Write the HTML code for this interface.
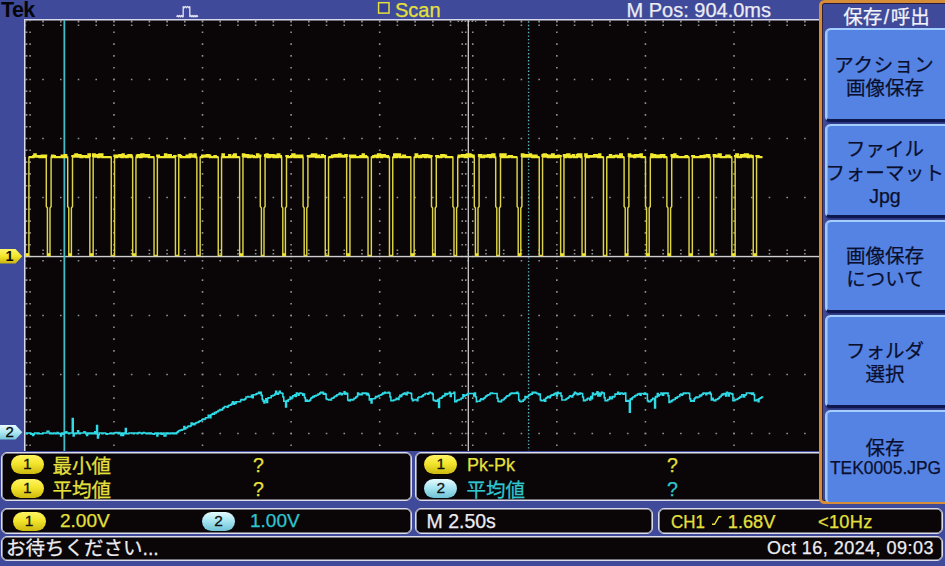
<!DOCTYPE html>
<html lang="ja">
<head>
<meta charset="utf-8">
<title>Tek TBS – 保存/呼出</title>
<style>
html,body{margin:0;padding:0;}
body{width:945px;height:566px;overflow:hidden;background:#3f4a9b;position:relative;
  font-family:"Liberation Sans","Noto Sans CJK JP",sans-serif;font-size:19.5px;line-height:24px;color:#eee;}
.abs{position:absolute;white-space:nowrap;}
.yel,.cya,.wht,.btn div,.mtitle{-webkit-text-stroke:0.25px currentColor;}
#plot{position:absolute;left:24px;top:19px;width:795px;height:432px;background:#0a0608;
  border-left:1px solid #d8d9ee;border-top:1px solid #d8d9ee;box-shadow:inset 0.5px 0.5px 0 0 #d8d9ee;box-sizing:border-box;}
.tek{left:1px;top:-2.3px;font-weight:bold;font-size:21.5px;color:#05050a;letter-spacing:-0.6px;}
.hdr{font-size:20px;top:-2px;}
.yel{color:#e6e03c;}
.cya{color:#2fc6d0;}
.wht{color:#ececf2;}
.panel{position:absolute;box-sizing:border-box;background:#0a0608;border:1px solid #dcdcea;border-radius:6px;box-shadow:inset 0 0 0 0.6px #dcdcea;}
.badge{-webkit-text-stroke:0.3px #111;position:absolute;width:33px;height:18.5px;border-radius:9.5px;color:#111;font-size:15.5px;line-height:18.5px;text-align:center;}
.b1{background:linear-gradient(#fff465 0%,#f3e52c 45%,#cdb910 100%);}
.b2{background:linear-gradient(#e6fbff 0%,#a9e6f2 45%,#6ec3d6 100%);}
#menu{position:absolute;left:818.6px;top:0;width:140px;height:504.4px;box-sizing:border-box;background:#3f4a9b;
  border:3px solid #d78d38;border-radius:5.5px;box-shadow:inset 0 0 0 0.9px #2a1c34;}
.btn{position:absolute;left:824.5px;width:130px;height:93.6px;box-sizing:border-box;background:#5583e4;
  border-radius:5.5px;border-top:2px solid #a4ceff;border-left:2px solid #9ec9ff;border-bottom:3px solid #0f184e;
  box-shadow:inset 0.6px 0 0 0 #93c0fc, 0 1.6px 0 0 #2c3680;color:#0a0f2e;text-align:center;}
.btn div{margin:-1px 0 0 -1px;position:absolute;left:0;width:119px;text-align:center;white-space:nowrap;font-size:19.5px;line-height:24px;}
.mtitle{left:827px;width:119px;text-align:center;top:5px;color:#f2f2f8;font-size:19.5px;}
</style>
</head>
<body>
<div id="plot"></div>
<svg id="scope" width="945" height="566" viewBox="0 0 945 566" style="position:absolute;left:0;top:0">
<defs><clipPath id="pc"><rect x="25" y="20" width="794" height="431"/></clipPath></defs>
<g clip-path="url(#pc)">
<g stroke="#909092" stroke-width="1.6" fill="none"><path d="M24.55,20.50H819" stroke-dasharray="1.6 16.117"/><path d="M24.55,79.50H819" stroke-dasharray="1.6 16.117"/><path d="M24.55,138.50H819" stroke-dasharray="1.6 16.117"/><path d="M24.55,197.50H819" stroke-dasharray="1.6 16.117"/><path d="M24.55,315.50H819" stroke-dasharray="1.6 16.117"/><path d="M24.55,374.50H819" stroke-dasharray="1.6 16.117"/><path d="M24.55,433.50H819" stroke-dasharray="1.6 16.117"/><path d="M25.35,19.70V451" stroke-dasharray="1.6 10.200"/><path d="M113.94,19.70V451" stroke-dasharray="1.6 10.200"/><path d="M202.52,19.70V451" stroke-dasharray="1.6 10.200"/><path d="M291.11,19.70V451" stroke-dasharray="1.6 10.200"/><path d="M379.69,19.70V451" stroke-dasharray="1.6 10.200"/><path d="M556.86,19.70V451" stroke-dasharray="1.6 10.200"/><path d="M645.44,19.70V451" stroke-dasharray="1.6 10.200"/><path d="M734.03,19.70V451" stroke-dasharray="1.6 10.200"/><path d="M26.60,19.70V451" stroke-dasharray="1.6 10.200"/><path d="M30.10,19.70V451" stroke-dasharray="1.6 10.200"/><path d="M24.55,21.60H819" stroke-dasharray="1.6 16.117"/><path d="M24.55,25.30H819" stroke-dasharray="1.6 16.117"/><path d="M462.27,19.70V451" stroke-dasharray="1.6 10.200"/><path d="M465.77,19.70V451" stroke-dasharray="1.6 10.200"/><path d="M472.77,19.70V451" stroke-dasharray="1.6 10.200"/><path d="M24.55,250.30H819" stroke-dasharray="1.6 16.117"/><path d="M24.55,253.80H819" stroke-dasharray="1.6 16.117"/><path d="M24.55,260.80H819" stroke-dasharray="1.6 16.117"/><path d="M457.57,21.3H476.27" stroke-dasharray="1.5 2.0"/></g>
<rect x="467.67" y="20" width="1.3" height="431" fill="#c9c9cc"/>
<rect x="25" y="255.85" width="794" height="1.4" fill="#cfcfd2"/>
<path d="M528.6,21.3V451" stroke="#5fb4bc" stroke-width="1.4" stroke-dasharray="1.4 2.12" fill="none"/>
<rect x="63.45" y="20" width="1.8" height="431" fill="#43bcc5"/>
<path d="M25.20,157.10 L25.20,157.10 L25.20,255.40 L28.90,255.40 L28.90,157.10 L46.30,157.10 L46.30,206.50 L47.40,208.00 L47.40,255.40 L50.00,255.40 L50.00,208.00 L51.10,206.50 L51.10,157.10 L67.70,157.10 L67.70,206.50 L68.80,208.00 L68.80,255.40 L71.40,255.40 L71.40,208.00 L72.50,206.50 L72.50,157.10 L89.85,157.10 L89.85,255.40 L93.15,255.40 L93.15,157.10 L111.25,157.10 L111.25,255.40 L114.55,255.40 L114.55,157.10 L132.65,157.10 L132.65,255.40 L135.95,255.40 L135.95,157.10 L154.05,157.10 L154.05,255.40 L157.35,255.40 L157.35,157.10 L175.45,157.10 L175.45,255.40 L178.75,255.40 L178.75,157.10 L196.85,157.10 L196.85,255.40 L200.15,255.40 L200.15,157.10 L218.25,157.10 L218.25,255.40 L221.55,255.40 L221.55,157.10 L239.65,157.10 L239.65,255.40 L242.95,255.40 L242.95,157.10 L260.30,157.10 L260.30,206.50 L261.40,208.00 L261.40,255.40 L264.00,255.40 L264.00,208.00 L265.10,206.50 L265.10,157.10 L281.70,157.10 L281.70,206.50 L282.80,208.00 L282.80,255.40 L285.40,255.40 L285.40,208.00 L286.50,206.50 L286.50,157.10 L303.10,157.10 L303.10,206.50 L304.20,208.00 L304.20,255.40 L306.80,255.40 L306.80,208.00 L307.90,206.50 L307.90,157.10 L325.25,157.10 L325.25,255.40 L328.55,255.40 L328.55,157.10 L346.65,157.10 L346.65,255.40 L349.95,255.40 L349.95,157.10 L368.05,157.10 L368.05,255.40 L371.35,255.40 L371.35,157.10 L389.45,157.10 L389.45,255.40 L392.75,255.40 L392.75,157.10 L410.85,157.10 L410.85,255.40 L414.15,255.40 L414.15,157.10 L431.50,157.10 L431.50,206.50 L432.60,208.00 L432.60,255.40 L435.20,255.40 L435.20,208.00 L436.30,206.50 L436.30,157.10 L452.90,157.10 L452.90,206.50 L454.00,208.00 L454.00,255.40 L456.60,255.40 L456.60,208.00 L457.70,206.50 L457.70,157.10 L474.30,157.10 L474.30,206.50 L475.40,208.00 L475.40,255.40 L478.00,255.40 L478.00,208.00 L479.10,206.50 L479.10,157.10 L495.70,157.10 L495.70,206.50 L496.80,208.00 L496.80,255.40 L499.40,255.40 L499.40,208.00 L500.50,206.50 L500.50,157.10 L517.10,157.10 L517.10,206.50 L518.20,208.00 L518.20,255.40 L520.80,255.40 L520.80,208.00 L521.90,206.50 L521.90,157.10 L539.25,157.10 L539.25,255.40 L542.55,255.40 L542.55,157.10 L560.65,157.10 L560.65,255.40 L563.95,255.40 L563.95,157.10 L582.05,157.10 L582.05,255.40 L585.35,255.40 L585.35,157.10 L603.45,157.10 L603.45,255.40 L606.75,255.40 L606.75,157.10 L624.10,157.10 L624.10,206.50 L625.20,208.00 L625.20,255.40 L627.80,255.40 L627.80,208.00 L628.90,206.50 L628.90,157.10 L645.50,157.10 L645.50,206.50 L646.60,208.00 L646.60,255.40 L649.20,255.40 L649.20,208.00 L650.30,206.50 L650.30,157.10 L666.90,157.10 L666.90,206.50 L668.00,208.00 L668.00,255.40 L670.60,255.40 L670.60,208.00 L671.70,206.50 L671.70,157.10 L689.05,157.10 L689.05,255.40 L692.35,255.40 L692.35,157.10 L710.45,157.10 L710.45,255.40 L713.75,255.40 L713.75,157.10 L731.85,157.10 L731.85,255.40 L735.15,255.40 L735.15,157.10 L753.25,157.10 L753.25,255.40 L756.55,255.40 L756.55,157.10 L762.40,157.10" fill="none" stroke="#ddd447" stroke-width="1.45" stroke-linejoin="miter"/>
<path d="M28.90,157.10 L30.40,157.10 L32.40,157.10 L33.40,157.10 L33.40,156.10 L34.40,156.10 L34.40,157.10 L34.40,154.50 L35.60,154.50 L35.60,157.10 L35.60,156.10 L37.60,156.10 L37.60,157.10 L37.60,156.10 L39.60,156.10 L39.60,157.10 L40.80,157.10 L41.80,157.10 L41.80,155.60 L43.80,155.60 L43.80,157.10 L44.80,157.10 L44.80,155.60 L46.00,155.60 L46.00,157.10 L46.30,157.10 M51.10,157.10 L52.10,157.10 L52.10,155.60 L53.30,155.60 L53.30,157.10 L53.30,156.10 L54.80,156.10 L54.80,157.10 L55.80,157.10 L57.80,157.10 L59.80,157.10 L61.80,157.10 L61.80,155.60 L63.80,155.60 L63.80,157.10 L65.00,157.10 L65.00,155.10 L66.20,155.10 L66.20,157.10 L67.70,157.10 L67.70,157.10 M72.50,157.10 L72.50,156.10 L74.50,156.10 L74.50,157.10 L74.50,155.60 L75.50,155.60 L75.50,157.10 L75.50,154.50 L77.00,154.50 L77.00,157.10 L77.00,156.10 L79.00,156.10 L79.00,157.10 L79.00,155.10 L80.50,155.10 L80.50,157.10 L82.50,157.10 L82.50,156.10 L84.50,156.10 L84.50,157.10 L84.50,156.10 L86.00,156.10 L86.00,157.10 L87.00,157.10 L88.50,157.10 L88.50,154.50 L89.85,154.50 L89.85,157.10 L89.85,157.10 M93.15,157.10 L93.15,154.50 L94.65,154.50 L94.65,157.10 L94.65,156.10 L96.15,156.10 L96.15,157.10 L96.15,155.10 L98.15,155.10 L98.15,157.10 L99.35,157.10 L99.35,154.50 L101.35,154.50 L101.35,157.10 L101.35,154.50 L102.35,154.50 L102.35,157.10 L103.85,157.10 L105.85,157.10 L107.35,157.10 L108.85,157.10 L110.85,157.10 L111.25,157.10 M114.55,157.10 L114.55,155.60 L115.75,155.60 L115.75,157.10 L116.95,157.10 L116.95,155.60 L117.95,155.60 L117.95,157.10 L117.95,155.60 L119.45,155.60 L119.45,157.10 L119.45,155.10 L121.45,155.10 L121.45,157.10 L122.65,157.10 L122.65,154.50 L123.65,154.50 L123.65,157.10 L123.65,156.10 L125.65,156.10 L125.65,157.10 L127.65,157.10 L127.65,155.60 L128.65,155.60 L128.65,157.10 L128.65,155.10 L130.65,155.10 L130.65,157.10 L130.65,155.60 L131.65,155.60 L131.65,157.10 L132.65,157.10 M135.95,157.10 L136.95,157.10 L136.95,155.60 L137.95,155.60 L137.95,157.10 L137.95,155.10 L139.95,155.10 L139.95,157.10 L141.45,157.10 L141.45,154.50 L143.45,154.50 L143.45,157.10 L143.45,155.10 L145.45,155.10 L145.45,157.10 L145.45,155.10 L146.45,155.10 L146.45,157.10 L146.45,155.60 L147.95,155.60 L147.95,157.10 L147.95,155.10 L148.95,155.10 L148.95,157.10 L150.15,157.10 L151.15,157.10 L152.65,157.10 L153.65,157.10 L154.05,157.10 M157.35,157.10 L157.35,155.60 L158.85,155.60 L158.85,157.10 L160.35,157.10 L161.85,157.10 L163.05,157.10 L165.05,157.10 L165.05,154.50 L166.25,154.50 L166.25,157.10 L167.75,157.10 L168.75,157.10 L168.75,155.10 L170.75,155.10 L170.75,157.10 L172.75,157.10 L174.25,157.10 L174.25,156.10 L175.45,156.10 L175.45,157.10 L175.45,157.10 M178.75,157.10 L178.75,155.10 L179.95,155.10 L179.95,157.10 L179.95,156.10 L181.15,156.10 L181.15,157.10 L183.15,157.10 L184.65,157.10 L185.65,157.10 L186.65,157.10 L186.65,155.60 L187.85,155.60 L187.85,157.10 L189.85,157.10 L189.85,154.50 L191.35,154.50 L191.35,157.10 L191.35,156.10 L193.35,156.10 L193.35,157.10 L193.35,155.60 L194.55,155.60 L194.55,157.10 L194.55,154.50 L195.55,154.50 L195.55,157.10 L196.75,157.10 L196.85,157.10 M200.15,157.10 L202.15,157.10 L202.15,155.60 L203.65,155.60 L203.65,157.10 L203.65,156.10 L204.65,156.10 L204.65,157.10 L204.65,155.60 L205.85,155.60 L205.85,157.10 L205.85,155.60 L207.05,155.60 L207.05,157.10 L207.05,155.10 L208.55,155.10 L208.55,157.10 L208.55,155.60 L210.05,155.60 L210.05,157.10 L211.05,157.10 L212.55,157.10 L214.55,157.10 L214.55,156.10 L215.75,156.10 L215.75,157.10 L217.75,157.10 L218.25,157.10 M221.55,157.10 L222.55,157.10 L222.55,154.50 L223.75,154.50 L223.75,157.10 L224.75,157.10 L226.25,157.10 L228.25,157.10 L229.25,157.10 L229.25,155.10 L230.25,155.10 L230.25,157.10 L231.25,157.10 L233.25,157.10 L233.25,155.60 L234.25,155.60 L234.25,157.10 L234.25,154.50 L235.75,154.50 L235.75,157.10 L236.95,157.10 L238.45,157.10 L239.65,157.10 L239.65,157.10 M242.95,157.10 L242.95,154.50 L244.15,154.50 L244.15,157.10 L244.15,155.60 L246.15,155.60 L246.15,157.10 L246.15,155.10 L248.15,155.10 L248.15,157.10 L249.15,157.10 L250.35,157.10 L250.35,155.60 L251.85,155.60 L251.85,157.10 L251.85,156.10 L253.85,156.10 L253.85,157.10 L255.85,157.10 L257.05,157.10 L257.05,154.50 L258.25,154.50 L258.25,157.10 L258.25,155.60 L260.25,155.60 L260.25,157.10 L260.30,157.10 M265.10,157.10 L265.10,155.10 L266.60,155.10 L266.60,157.10 L266.60,154.50 L267.60,154.50 L267.60,157.10 L269.60,157.10 L269.60,155.10 L271.60,155.10 L271.60,157.10 L271.60,155.60 L272.60,155.60 L272.60,157.10 L272.60,155.10 L273.60,155.10 L273.60,157.10 L274.60,157.10 L274.60,155.60 L275.80,155.60 L275.80,157.10 L277.80,157.10 L277.80,154.50 L279.30,154.50 L279.30,157.10 L279.30,156.10 L280.80,156.10 L280.80,157.10 L281.70,157.10 M286.50,157.10 L286.50,156.10 L287.70,156.10 L287.70,157.10 L289.20,157.10 L290.20,157.10 L291.20,157.10 L291.20,156.10 L292.40,156.10 L292.40,157.10 L292.40,154.50 L294.40,154.50 L294.40,157.10 L295.90,157.10 L295.90,155.60 L296.90,155.60 L296.90,157.10 L297.90,157.10 L297.90,155.60 L299.40,155.60 L299.40,157.10 L300.90,157.10 L300.90,155.60 L302.10,155.60 L302.10,157.10 L303.10,157.10 M307.90,157.10 L307.90,156.10 L309.40,156.10 L309.40,157.10 L309.40,156.10 L310.90,156.10 L310.90,157.10 L310.90,155.60 L312.10,155.60 L312.10,157.10 L312.10,154.50 L314.10,154.50 L314.10,157.10 L314.10,154.50 L316.10,154.50 L316.10,157.10 L317.60,157.10 L317.60,155.60 L318.80,155.60 L318.80,157.10 L320.80,157.10 L321.80,157.10 L321.80,155.10 L322.80,155.10 L322.80,157.10 L322.80,156.10 L324.80,156.10 L324.80,157.10 L325.25,157.10 M328.55,157.10 L330.55,157.10 L332.05,157.10 L332.05,155.60 L333.55,155.60 L333.55,157.10 L333.55,156.10 L334.75,156.10 L334.75,157.10 L334.75,155.10 L336.25,155.10 L336.25,157.10 L336.25,155.10 L337.75,155.10 L337.75,157.10 L337.75,156.10 L338.95,156.10 L338.95,157.10 L338.95,154.50 L340.45,154.50 L340.45,157.10 L340.45,155.60 L341.95,155.60 L341.95,157.10 L341.95,156.10 L343.15,156.10 L343.15,157.10 L343.15,156.10 L344.15,156.10 L344.15,157.10 L344.15,156.10 L345.35,156.10 L345.35,157.10 L345.35,155.10 L346.65,155.10 L346.65,157.10 L346.65,157.10 M349.95,157.10 L349.95,155.60 L351.15,155.60 L351.15,157.10 L353.15,157.10 L353.15,155.60 L355.15,155.60 L355.15,157.10 L356.15,157.10 L358.15,157.10 L359.35,157.10 L360.35,157.10 L360.35,156.10 L361.55,156.10 L361.55,157.10 L362.75,157.10 L362.75,154.50 L363.75,154.50 L363.75,157.10 L364.75,157.10 L364.75,156.10 L365.95,156.10 L365.95,157.10 L367.95,157.10 L368.05,157.10 M371.35,157.10 L372.35,157.10 L373.35,157.10 L373.35,156.10 L375.35,156.10 L375.35,157.10 L375.35,155.60 L376.85,155.60 L376.85,157.10 L378.05,157.10 L378.05,154.50 L380.05,154.50 L380.05,157.10 L380.05,155.10 L381.05,155.10 L381.05,157.10 L382.05,157.10 L382.05,155.60 L383.25,155.60 L383.25,157.10 L383.25,155.10 L384.75,155.10 L384.75,157.10 L384.75,156.10 L385.95,156.10 L385.95,157.10 L385.95,156.10 L387.95,156.10 L387.95,157.10 L389.15,157.10 L389.45,157.10 M392.75,157.10 L394.25,157.10 L394.25,154.50 L395.75,154.50 L395.75,157.10 L396.75,157.10 L396.75,156.10 L397.95,156.10 L397.95,157.10 L397.95,154.50 L399.95,154.50 L399.95,157.10 L400.95,157.10 L402.95,157.10 L402.95,155.60 L404.95,155.60 L404.95,157.10 L405.95,157.10 L407.15,157.10 L408.65,157.10 L409.85,157.10 L410.85,157.10 M414.15,157.10 L415.65,157.10 L415.65,154.50 L417.15,154.50 L417.15,157.10 L417.15,156.10 L419.15,156.10 L419.15,157.10 L421.15,157.10 L421.15,155.60 L423.15,155.60 L423.15,157.10 L423.15,155.10 L425.15,155.10 L425.15,157.10 L426.15,157.10 L426.15,155.10 L427.15,155.10 L427.15,157.10 L427.15,155.60 L429.15,155.60 L429.15,157.10 L430.15,157.10 L430.15,156.10 L431.50,156.10 L431.50,157.10 L431.50,157.10 M436.30,157.10 L436.30,156.10 L438.30,156.10 L438.30,157.10 L439.80,157.10 L441.30,157.10 L441.30,155.10 L442.80,155.10 L442.80,157.10 L442.80,155.10 L444.00,155.10 L444.00,157.10 L444.00,155.60 L446.00,155.60 L446.00,157.10 L447.50,157.10 L449.50,157.10 L451.50,157.10 L452.70,157.10 L452.90,157.10 M457.70,157.10 L458.70,157.10 L458.70,155.60 L460.70,155.60 L460.70,157.10 L460.70,155.60 L462.20,155.60 L462.20,157.10 L462.20,155.10 L463.40,155.10 L463.40,157.10 L463.40,155.10 L464.90,155.10 L464.90,157.10 L466.90,157.10 L466.90,154.50 L468.40,154.50 L468.40,157.10 L468.40,155.60 L469.40,155.60 L469.40,157.10 L469.40,154.50 L470.40,154.50 L470.40,157.10 L470.40,155.10 L471.60,155.10 L471.60,157.10 L471.60,155.60 L473.60,155.60 L473.60,157.10 L474.30,157.10 M479.10,157.10 L479.10,155.10 L480.30,155.10 L480.30,157.10 L480.30,155.10 L481.30,155.10 L481.30,157.10 L482.80,157.10 L484.00,157.10 L484.00,155.60 L486.00,155.60 L486.00,157.10 L486.00,156.10 L488.00,156.10 L488.00,157.10 L488.00,155.10 L490.00,155.10 L490.00,157.10 L491.20,157.10 L491.20,155.60 L492.40,155.60 L492.40,157.10 L492.40,154.50 L494.40,154.50 L494.40,157.10 L495.70,157.10 L495.70,157.10 M500.50,157.10 L500.50,154.50 L501.50,154.50 L501.50,157.10 L503.50,157.10 L503.50,154.50 L505.50,154.50 L505.50,157.10 L507.50,157.10 L508.70,157.10 L508.70,156.10 L509.90,156.10 L509.90,157.10 L509.90,156.10 L511.90,156.10 L511.90,157.10 L512.90,157.10 L514.10,157.10 L515.10,157.10 L516.60,157.10 L517.10,157.10 M521.90,157.10 L521.90,154.50 L523.40,154.50 L523.40,157.10 L523.40,155.10 L524.40,155.10 L524.40,157.10 L524.40,155.60 L525.60,155.60 L525.60,157.10 L525.60,155.10 L526.60,155.10 L526.60,157.10 L526.60,155.10 L528.60,155.10 L528.60,157.10 L528.60,155.60 L529.80,155.60 L529.80,157.10 L529.80,154.50 L531.00,154.50 L531.00,157.10 L531.00,155.60 L532.50,155.60 L532.50,157.10 L534.50,157.10 L534.50,155.60 L536.50,155.60 L536.50,157.10 L538.50,157.10 L539.25,157.10 M542.55,157.10 L542.55,155.10 L543.75,155.10 L543.75,157.10 L543.75,154.50 L545.75,154.50 L545.75,157.10 L545.75,155.10 L546.95,155.10 L546.95,157.10 L546.95,155.60 L547.95,155.60 L547.95,157.10 L549.45,157.10 L549.45,155.60 L550.65,155.60 L550.65,157.10 L552.15,157.10 L552.15,154.50 L553.65,154.50 L553.65,157.10 L554.85,157.10 L554.85,156.10 L556.85,156.10 L556.85,157.10 L558.05,157.10 L558.05,155.60 L559.05,155.60 L559.05,157.10 L559.05,156.10 L560.65,156.10 L560.65,157.10 L560.65,157.10 M563.95,157.10 L563.95,155.10 L565.15,155.10 L565.15,157.10 L566.15,157.10 L566.15,155.60 L567.35,155.60 L567.35,157.10 L567.35,154.50 L569.35,154.50 L569.35,157.10 L570.85,157.10 L570.85,156.10 L572.85,156.10 L572.85,157.10 L572.85,155.10 L573.85,155.10 L573.85,157.10 L575.85,157.10 L576.85,157.10 L576.85,155.10 L578.05,155.10 L578.05,157.10 L578.05,154.50 L580.05,154.50 L580.05,157.10 L580.05,154.50 L581.25,154.50 L581.25,157.10 L582.05,157.10 M585.35,157.10 L585.35,154.50 L586.55,154.50 L586.55,157.10 L587.55,157.10 L588.75,157.10 L588.75,156.10 L590.75,156.10 L590.75,157.10 L590.75,156.10 L592.75,156.10 L592.75,157.10 L592.75,156.10 L594.25,156.10 L594.25,157.10 L594.25,155.10 L595.75,155.10 L595.75,157.10 L595.75,155.10 L596.75,155.10 L596.75,157.10 L596.75,156.10 L598.25,156.10 L598.25,157.10 L599.25,157.10 L599.25,154.50 L600.25,154.50 L600.25,157.10 L602.25,157.10 L603.45,157.10 M606.75,157.10 L608.75,157.10 L609.95,157.10 L609.95,155.10 L611.15,155.10 L611.15,157.10 L612.35,157.10 L613.85,157.10 L613.85,156.10 L615.85,156.10 L615.85,157.10 L615.85,155.60 L617.05,155.60 L617.05,157.10 L617.05,156.10 L618.25,156.10 L618.25,157.10 L620.25,157.10 L620.25,154.50 L621.75,154.50 L621.75,157.10 L622.75,157.10 L624.10,157.10 L624.10,157.10 M628.90,157.10 L628.90,154.50 L630.10,154.50 L630.10,157.10 L630.10,155.60 L632.10,155.60 L632.10,157.10 L632.10,155.60 L634.10,155.60 L634.10,157.10 L635.10,157.10 L635.10,155.10 L636.60,155.10 L636.60,157.10 L636.60,155.10 L638.10,155.10 L638.10,157.10 L638.10,155.60 L639.30,155.60 L639.30,157.10 L639.30,155.10 L640.50,155.10 L640.50,157.10 L640.50,154.50 L641.70,154.50 L641.70,157.10 L643.20,157.10 L644.40,157.10 L645.50,157.10 M650.30,157.10 L651.30,157.10 L651.30,154.50 L652.30,154.50 L652.30,157.10 L653.50,157.10 L653.50,155.10 L655.00,155.10 L655.00,157.10 L655.00,155.60 L656.20,155.60 L656.20,157.10 L657.40,157.10 L657.40,155.60 L658.90,155.60 L658.90,157.10 L660.90,157.10 L660.90,155.10 L661.90,155.10 L661.90,157.10 L661.90,155.10 L663.10,155.10 L663.10,157.10 L663.10,155.10 L664.30,155.10 L664.30,157.10 L665.30,157.10 L666.50,157.10 L666.90,157.10 M671.70,157.10 L671.70,155.10 L673.20,155.10 L673.20,157.10 L674.40,157.10 L674.40,154.50 L675.40,154.50 L675.40,157.10 L675.40,156.10 L677.40,156.10 L677.40,157.10 L679.40,157.10 L680.60,157.10 L681.60,157.10 L683.60,157.10 L685.60,157.10 L685.60,156.10 L687.10,156.10 L687.10,157.10 L688.60,157.10 L689.05,157.10 M692.35,157.10 L692.35,156.10 L693.85,156.10 L693.85,157.10 L695.35,157.10 L697.35,157.10 L698.55,157.10 L700.55,157.10 L700.55,156.10 L702.55,156.10 L702.55,157.10 L704.55,157.10 L704.55,155.60 L706.05,155.60 L706.05,157.10 L706.05,155.60 L707.25,155.60 L707.25,157.10 L707.25,155.10 L709.25,155.10 L709.25,157.10 L710.45,157.10 M713.75,157.10 L713.75,155.10 L714.95,155.10 L714.95,157.10 L714.95,156.10 L716.15,156.10 L716.15,157.10 L716.15,155.60 L717.15,155.60 L717.15,157.10 L717.15,156.10 L718.65,156.10 L718.65,157.10 L718.65,154.50 L720.65,154.50 L720.65,157.10 L721.65,157.10 L722.85,157.10 L724.05,157.10 L725.25,157.10 L726.45,157.10 L726.45,155.60 L727.45,155.60 L727.45,157.10 L727.45,155.60 L729.45,155.60 L729.45,157.10 L730.65,157.10 L731.85,157.10 M735.15,157.10 L735.15,156.10 L736.35,156.10 L736.35,157.10 L736.35,154.50 L737.85,154.50 L737.85,157.10 L739.35,157.10 L740.85,157.10 L740.85,155.10 L742.85,155.10 L742.85,157.10 L742.85,155.60 L744.85,155.60 L744.85,157.10 L744.85,154.50 L745.85,154.50 L745.85,157.10 L745.85,154.50 L747.85,154.50 L747.85,157.10 L749.05,157.10 L749.05,155.60 L751.05,155.60 L751.05,157.10 L751.05,156.10 L752.55,156.10 L752.55,157.10 L753.25,157.10 M756.55,157.10 L756.55,156.10 L758.55,156.10 L758.55,157.10 L759.55,157.10 L760.55,157.10 L762.05,157.10 L762.40,157.10" fill="none" stroke="#f2ea2e" stroke-width="2.4"/>
<g fill="#efe52c"><rect x="25.70" y="253.20" width="3.2" height="2.6"/><rect x="47.10" y="253.20" width="3.2" height="2.6"/><rect x="68.50" y="253.20" width="3.2" height="2.6"/><rect x="89.90" y="253.20" width="3.2" height="2.6"/><rect x="132.70" y="253.20" width="3.2" height="2.6"/><rect x="239.70" y="253.20" width="3.2" height="2.6"/><rect x="282.50" y="253.20" width="3.2" height="2.6"/><rect x="346.70" y="253.20" width="3.2" height="2.6"/><rect x="410.90" y="253.20" width="3.2" height="2.6"/><rect x="432.30" y="253.20" width="3.2" height="2.6"/><rect x="475.10" y="253.20" width="3.2" height="2.6"/><rect x="517.90" y="253.20" width="3.2" height="2.6"/><rect x="560.70" y="253.20" width="3.2" height="2.6"/><rect x="582.10" y="253.20" width="3.2" height="2.6"/><rect x="624.90" y="253.20" width="3.2" height="2.6"/><rect x="646.30" y="253.20" width="3.2" height="2.6"/><rect x="667.70" y="253.20" width="3.2" height="2.6"/><rect x="689.10" y="253.20" width="3.2" height="2.6"/><rect x="710.50" y="253.20" width="3.2" height="2.6"/><rect x="731.90" y="253.20" width="3.2" height="2.6"/><rect x="753.30" y="253.20" width="3.2" height="2.6"/></g>
<path d="M25.50,433.06 H26.40 V433.65 H27.30 V433.06 H28.20 V433.06 H29.10 V433.06 H30.00 V433.06 H30.90 V434.24 H31.80 V433.65 H32.70 V435.42 H33.60 V434.24 H34.50 V433.06 H35.40 V433.06 H36.30 V433.06 H37.20 V433.65 H38.10 V433.06 H39.00 V433.65 H39.90 V433.65 H40.80 V433.65 H41.70 V433.65 H42.60 V433.06 H43.50 V433.06 H44.40 V433.06 H45.30 V433.06 H46.20 V433.06 H47.10 V431.29 H48.00 V431.29 H48.90 V433.06 H49.80 V433.65 H50.70 V433.06 H51.60 V433.65 H52.50 V433.65 H53.40 V433.06 H54.30 V433.06 H55.20 V433.65 H56.10 V433.65 H57.00 V432.47 H57.90 V433.06 H58.80 V433.65 H59.70 V433.65 H60.60 V436.01 H61.50 V433.06 H62.40 V434.24 H63.30 V433.65 H64.20 V432.47 H65.10 V433.06 H66.00 V431.88 H66.90 V433.06 H67.80 V433.06 H68.70 V433.65 H69.60 V433.06 H70.50 V433.06 H71.40 V433.06 H72.30 V418.60 H73.20 V436.00 H74.10 V433.65 H75.00 V433.06 H75.90 V433.65 H76.80 V433.06 H77.70 V430.70 H78.60 V433.06 H79.50 V433.65 H80.40 V433.06 H81.30 V433.06 H82.20 V433.06 H83.10 V433.06 H84.00 V431.88 H84.90 V432.47 H85.80 V433.65 H86.70 V435.42 H87.60 V433.06 H88.50 V433.65 H89.40 V433.06 H90.30 V433.65 H91.20 V433.06 H92.10 V433.65 H93.00 V433.06 H93.90 V433.65 H94.80 V431.88 H95.70 V433.65 H96.60 V425.50 H97.50 V438.00 H98.40 V434.83 H99.30 V433.06 H100.20 V433.06 H101.10 V433.06 H102.00 V433.65 H102.90 V433.06 H103.80 V433.06 H104.70 V433.06 H105.60 V433.65 H106.50 V434.24 H107.40 V433.65 H108.30 V433.65 H109.20 V433.65 H110.10 V433.06 H111.00 V433.06 H111.90 V433.65 H112.80 V433.65 H113.70 V433.06 H114.60 V433.06 H115.50 V432.47 H116.40 V432.47 H117.30 V433.06 H118.20 V433.65 H119.10 V432.47 H120.00 V433.65 H120.90 V435.42 H121.80 V433.06 H122.70 V435.42 H123.60 V433.06 H124.50 V433.65 H125.40 V428.50 H126.30 V433.65 H127.20 V433.65 H128.10 V433.65 H129.00 V433.06 H129.90 V433.06 H130.80 V433.06 H131.70 V433.06 H132.60 V433.06 H133.50 V433.65 H134.40 V433.06 H135.30 V433.06 H136.20 V433.06 H137.10 V433.65 H138.00 V433.06 H138.90 V432.47 H139.80 V433.06 H140.70 V433.06 H141.60 V433.65 H142.50 V433.06 H143.40 V432.47 H144.30 V433.06 H145.20 V433.06 H146.10 V433.65 H147.00 V433.65 H147.90 V433.06 H148.80 V433.06 H149.70 V433.65 H150.60 V433.06 H151.50 V433.65 H152.40 V433.65 H153.30 V434.24 H154.20 V433.65 H155.10 V433.06 H156.00 V433.06 H156.90 V436.01 H157.80 V433.06 H158.70 V433.65 H159.60 V433.65 H160.50 V433.06 H161.40 V434.24 H162.30 V433.65 H163.20 V433.06 H164.10 V436.01 H165.00 V436.01 H165.90 V433.06 H166.80 V433.65 H167.70 V433.06 H168.60 V433.65 H169.50 V433.65 H170.40 V433.06 H171.30 V433.06 H172.20 V433.65 H173.10 V433.06 H174.00 V433.65 H174.90 V433.06 H175.80 V433.65 H176.70 V432.47 H177.60 V431.88 H178.50 V430.70 H179.40 V430.70 H180.30 V430.11 H181.20 V430.11 H182.10 V429.52 H183.00 V429.52 H183.90 V426.57 H184.80 V428.93 H185.70 V427.75 H186.60 V427.75 H187.50 V426.57 H188.40 V425.98 H189.30 V426.57 H190.20 V425.98 H191.10 V423.03 H192.00 V424.80 H192.90 V423.62 H193.80 V424.80 H194.70 V423.62 H195.60 V423.03 H196.50 V422.44 H197.40 V422.44 H198.30 V421.85 H199.20 V421.26 H200.10 V420.67 H201.00 V420.67 H201.90 V419.49 H202.80 V418.90 H203.70 V419.49 H204.60 V418.90 H205.50 V417.72 H206.40 V417.72 H207.30 V417.72 H208.20 V415.36 H209.10 V415.95 H210.00 V417.72 H210.90 V414.77 H211.80 V414.18 H212.70 V413.59 H213.60 V414.18 H214.50 V412.41 H215.40 V413.00 H216.30 V411.82 H217.20 V411.82 H218.10 V410.64 H219.00 V410.64 H219.90 V409.46 H220.80 V409.46 H221.70 V410.05 H222.60 V408.28 H223.50 V407.69 H224.40 V406.51 H225.30 V406.51 H226.20 V406.51 H227.10 V407.10 H228.00 V405.92 H228.90 V405.33 H229.80 V405.33 H230.70 V404.74 H231.60 V403.56 H232.50 V401.79 H233.40 V404.15 H234.30 V402.38 H235.20 V403.56 H236.10 V401.79 H237.00 V401.79 H237.90 V401.79 H238.80 V401.79 H239.70 V401.79 H240.60 V400.02 H241.50 V399.43 H242.40 V399.43 H243.30 V400.02 H244.20 V399.43 H245.10 V398.84 H246.00 V397.07 H246.90 V397.07 H247.80 V396.48 H248.70 V397.07 H249.60 V397.07 H250.50 V397.07 H251.40 V395.30 H252.30 V397.66 H253.20 V394.71 H254.10 V394.71 H255.00 V394.71 H255.90 V394.12 H256.80 V393.53 H257.70 V393.53 H258.60 V392.35 H259.50 V393.53 H260.40 V392.35 H261.30 V395.30 H262.20 V399.43 H263.10 V401.20 H264.00 V402.97 H264.90 V400.61 H265.80 V398.84 H266.70 V402.38 H267.60 V398.25 H268.50 V397.66 H269.40 V397.66 H270.30 V397.66 H271.20 V395.89 H272.10 V395.89 H273.00 V395.30 H273.90 V395.30 H274.80 V394.12 H275.70 V391.17 H276.60 V393.53 H277.50 V394.12 H278.40 V392.94 H279.30 V391.17 H280.20 V392.94 H281.10 V392.94 H282.00 V393.53 H282.90 V397.07 H283.80 V401.20 H284.70 V401.20 H285.60 V407.00 H286.50 V400.61 H287.40 V401.20 H288.30 V399.43 H289.20 V399.43 H290.10 V397.07 H291.00 V398.84 H291.90 V397.66 H292.80 V395.89 H293.70 V395.89 H294.60 V394.71 H295.50 V396.48 H296.40 V392.94 H297.30 V393.53 H298.20 V395.30 H299.10 V393.53 H300.00 V392.94 H300.90 V393.53 H301.80 V393.53 H302.70 V395.30 H303.60 V394.12 H304.50 V397.66 H305.40 V401.20 H306.30 V400.02 H307.20 V401.20 H308.10 V401.20 H309.00 V400.61 H309.90 V400.02 H310.80 V398.25 H311.70 V397.66 H312.60 V396.48 H313.50 V397.07 H314.40 V395.89 H315.30 V395.89 H316.20 V395.30 H317.10 V395.30 H318.00 V394.12 H318.90 V394.12 H319.80 V392.94 H320.70 V392.35 H321.60 V392.94 H322.50 V392.35 H323.40 V394.12 H324.30 V393.53 H325.20 V394.12 H326.10 V398.84 H327.00 V399.43 H327.90 V399.43 H328.80 V400.02 H329.70 V399.43 H330.60 V400.02 H331.50 V398.25 H332.40 V398.25 H333.30 V397.66 H334.20 V396.48 H335.10 V396.48 H336.00 V395.89 H336.90 V394.71 H337.80 V394.71 H338.70 V394.12 H339.60 V392.94 H340.50 V393.53 H341.40 V394.71 H342.30 V393.53 H343.20 V393.53 H344.10 V391.76 H345.00 V394.12 H345.90 V392.94 H346.80 V393.53 H347.70 V400.02 H348.60 V400.61 H349.50 V400.61 H350.40 V399.43 H351.30 V399.43 H352.20 V400.02 H353.10 V399.43 H354.00 V398.25 H354.90 V398.25 H355.80 V397.07 H356.70 V396.48 H357.60 V392.94 H358.50 V394.71 H359.40 V394.12 H360.30 V394.71 H361.20 V394.71 H362.10 V392.94 H363.00 V393.53 H363.90 V392.94 H364.80 V393.53 H365.70 V392.94 H366.60 V394.71 H367.50 V393.53 H368.40 V395.30 H369.30 V400.02 H370.20 V398.84 H371.10 V402.97 H372.00 V398.84 H372.90 V398.84 H373.80 V398.84 H374.70 V398.25 H375.60 V396.48 H376.50 V397.07 H377.40 V396.48 H378.30 V395.89 H379.20 V395.30 H380.10 V395.30 H381.00 V394.71 H381.90 V394.12 H382.80 V392.94 H383.70 V393.53 H384.60 V392.35 H385.50 V392.94 H386.40 V392.94 H387.30 V392.94 H388.20 V392.35 H389.10 V392.94 H390.00 V397.07 H390.90 V400.61 H391.80 V400.61 H392.70 V400.61 H393.60 V400.02 H394.50 V400.02 H395.40 V399.43 H396.30 V398.25 H397.20 V398.84 H398.10 V399.43 H399.00 V397.07 H399.90 V395.30 H400.80 V396.48 H401.70 V394.71 H402.60 V394.12 H403.50 V393.53 H404.40 V392.94 H405.30 V394.12 H406.20 V394.71 H407.10 V392.35 H408.00 V392.94 H408.90 V392.94 H409.80 V392.94 H410.70 V393.53 H411.60 V398.84 H412.50 V400.61 H413.40 V400.02 H414.30 V400.02 H415.20 V399.43 H416.10 V399.43 H417.00 V400.61 H417.90 V397.66 H418.80 V397.07 H419.70 V397.07 H420.60 V397.07 H421.50 V396.48 H422.40 V395.89 H423.30 V394.71 H424.20 V394.71 H425.10 V393.53 H426.00 V393.53 H426.90 V393.53 H427.80 V394.12 H428.70 V392.94 H429.60 V392.35 H430.50 V392.94 H431.40 V392.94 H432.30 V394.12 H433.20 V400.02 H434.10 V400.61 H435.00 V400.61 H435.90 V401.20 H436.80 V401.20 H437.70 V399.43 H438.60 V407.50 H439.50 V398.25 H440.40 V398.25 H441.30 V397.66 H442.20 V396.48 H443.10 V395.89 H444.00 V395.89 H444.90 V393.53 H445.80 V394.71 H446.70 V394.12 H447.60 V393.53 H448.50 V393.53 H449.40 V392.35 H450.30 V396.48 H451.20 V393.53 H452.10 V393.53 H453.00 V393.53 H453.90 V392.35 H454.80 V401.79 H455.70 V401.79 H456.60 V400.61 H457.50 V400.02 H458.40 V400.02 H459.30 V399.43 H460.20 V399.43 H461.10 V398.25 H462.00 V398.25 H462.90 V394.71 H463.80 V396.48 H464.70 V395.30 H465.60 V395.30 H466.50 V394.71 H467.40 V394.12 H468.30 V393.53 H469.20 V393.53 H470.10 V393.53 H471.00 V393.53 H471.90 V393.53 H472.80 V393.53 H473.70 V395.89 H474.60 V392.94 H475.50 V397.07 H476.40 V401.79 H477.30 V401.20 H478.20 V401.20 H479.10 V401.20 H480.00 V400.02 H480.90 V398.84 H481.80 V399.43 H482.70 V399.43 H483.60 V398.25 H484.50 V397.66 H485.40 V396.48 H486.30 V395.89 H487.20 V395.30 H488.10 V394.71 H489.00 V394.71 H489.90 V393.53 H490.80 V392.94 H491.70 V392.94 H492.60 V393.53 H493.50 V393.53 H494.40 V393.53 H495.30 V393.53 H496.20 V393.53 H497.10 V398.25 H498.00 V401.20 H498.90 V401.79 H499.80 V401.20 H500.70 V401.79 H501.60 V400.02 H502.50 V400.02 H503.40 V399.43 H504.30 V398.25 H505.20 V397.66 H506.10 V396.48 H507.00 V395.89 H507.90 V395.89 H508.80 V395.30 H509.70 V394.12 H510.60 V393.53 H511.50 V392.94 H512.40 V393.53 H513.30 V393.53 H514.20 V392.94 H515.10 V392.94 H516.00 V393.53 H516.90 V392.35 H517.80 V393.53 H518.70 V400.02 H519.60 V401.20 H520.50 V401.79 H521.40 V401.20 H522.30 V401.20 H523.20 V400.02 H524.10 V399.43 H525.00 V396.48 H525.90 V397.66 H526.80 V397.07 H527.70 V396.48 H528.60 V395.30 H529.50 V394.71 H530.40 V394.12 H531.30 V394.12 H532.20 V392.35 H533.10 V392.94 H534.00 V392.35 H534.90 V392.35 H535.80 V392.94 H536.70 V393.53 H537.60 V393.53 H538.50 V394.71 H539.40 V394.12 H540.30 V400.02 H541.20 V400.61 H542.10 V400.61 H543.00 V400.61 H543.90 V399.43 H544.80 V401.20 H545.70 V398.25 H546.60 V397.66 H547.50 V396.48 H548.40 V397.07 H549.30 V397.66 H550.20 V395.89 H551.10 V395.30 H552.00 V394.71 H552.90 V395.30 H553.80 V394.12 H554.70 V393.53 H555.60 V392.94 H556.50 V395.89 H557.40 V392.35 H558.30 V393.53 H559.20 V393.53 H560.10 V392.94 H561.00 V395.89 H561.90 V400.02 H562.80 V400.02 H563.70 V400.02 H564.60 V400.02 H565.50 V399.43 H566.40 V398.84 H567.30 V398.25 H568.20 V397.66 H569.10 V396.48 H570.00 V395.89 H570.90 V396.48 H571.80 V397.07 H572.70 V395.30 H573.60 V394.12 H574.50 V392.35 H575.40 V392.94 H576.30 V393.53 H577.20 V394.71 H578.10 V393.53 H579.00 V394.12 H579.90 V392.94 H580.80 V393.53 H581.70 V393.53 H582.60 V397.07 H583.50 V400.61 H584.40 V400.61 H585.30 V400.02 H586.20 V400.02 H587.10 V398.84 H588.00 V398.25 H588.90 V398.84 H589.80 V400.02 H590.70 V396.48 H591.60 V398.84 H592.50 V392.94 H593.40 V394.71 H594.30 V394.71 H595.20 V394.12 H596.10 V393.53 H597.00 V391.76 H597.90 V395.89 H598.80 V392.94 H599.70 V395.89 H600.60 V394.12 H601.50 V392.35 H602.40 V392.94 H603.30 V392.94 H604.20 V397.66 H605.10 V400.61 H606.00 V400.61 H606.90 V400.61 H607.80 V399.43 H608.70 V399.43 H609.60 V397.07 H610.50 V398.25 H611.40 V398.84 H612.30 V396.48 H613.20 V397.07 H614.10 V396.48 H615.00 V394.12 H615.90 V394.12 H616.80 V394.12 H617.70 V392.35 H618.60 V393.53 H619.50 V394.12 H620.40 V392.94 H621.30 V392.94 H622.20 V393.53 H623.10 V394.12 H624.00 V393.53 H624.90 V392.94 H625.80 V401.20 H626.70 V400.61 H627.60 V401.20 H628.50 V400.61 H629.40 V412.30 H630.30 V398.84 H631.20 V399.43 H632.10 V397.66 H633.00 V397.07 H633.90 V397.07 H634.80 V395.89 H635.70 V395.30 H636.60 V395.30 H637.50 V394.12 H638.40 V394.12 H639.30 V393.53 H640.20 V395.30 H641.10 V393.53 H642.00 V393.53 H642.90 V393.53 H643.80 V394.12 H644.70 V392.94 H645.60 V394.12 H646.50 V394.12 H647.40 V400.61 H648.30 V401.79 H649.20 V401.79 H650.10 V401.20 H651.00 V400.02 H651.90 V399.43 H652.80 V398.25 H653.70 V398.25 H654.60 V408.00 H655.50 V396.48 H656.40 V397.07 H657.30 V393.53 H658.20 V395.89 H659.10 V394.71 H660.00 V394.71 H660.90 V392.94 H661.80 V393.53 H662.70 V395.30 H663.60 V392.94 H664.50 V393.53 H665.40 V392.94 H666.30 V393.53 H667.20 V392.94 H668.10 V395.89 H669.00 V402.38 H669.90 V401.20 H670.80 V401.79 H671.70 V400.61 H672.60 V400.02 H673.50 V399.43 H674.40 V399.43 H675.30 V397.66 H676.20 V398.25 H677.10 V397.07 H678.00 V396.48 H678.90 V396.48 H679.80 V394.71 H680.70 V394.12 H681.60 V395.30 H682.50 V394.12 H683.40 V392.94 H684.30 V392.94 H685.20 V393.53 H686.10 V392.94 H687.00 V392.94 H687.90 V392.94 H688.80 V393.53 H689.70 V398.84 H690.60 V401.20 H691.50 V400.61 H692.40 V400.61 H693.30 V401.20 H694.20 V398.84 H695.10 V397.66 H696.00 V397.07 H696.90 V397.66 H697.80 V397.07 H698.70 V397.07 H699.60 V395.30 H700.50 V395.89 H701.40 V394.71 H702.30 V394.12 H703.20 V392.94 H704.10 V392.94 H705.00 V393.53 H705.90 V394.71 H706.80 V392.94 H707.70 V393.53 H708.60 V392.94 H709.50 V392.35 H710.40 V394.12 H711.30 V400.02 H712.20 V398.25 H713.10 V400.02 H714.00 V400.61 H714.90 V400.61 H715.80 V399.43 H716.70 V399.43 H717.60 V398.84 H718.50 V398.25 H719.40 V397.07 H720.30 V396.48 H721.20 V395.30 H722.10 V394.12 H723.00 V394.71 H723.90 V393.53 H724.80 V393.53 H725.70 V395.89 H726.60 V392.35 H727.50 V392.94 H728.40 V395.89 H729.30 V392.94 H730.20 V393.53 H731.10 V393.53 H732.00 V394.12 H732.90 V400.61 H733.80 V400.61 H734.70 V400.02 H735.60 V399.43 H736.50 V399.43 H737.40 V398.84 H738.30 V398.25 H739.20 V397.66 H740.10 V396.48 H741.00 V397.07 H741.90 V394.71 H742.80 V394.71 H743.70 V397.07 H744.60 V395.30 H745.50 V394.71 H746.40 V392.94 H747.30 V392.94 H748.20 V392.94 H749.10 V392.94 H750.00 V393.53 H750.90 V392.94 H751.80 V394.12 H752.70 V392.94 H753.60 V394.71 H754.50 V400.61 H755.40 V400.61 H756.30 V400.02 H757.20 V399.43 H758.10 V401.79 H759.00 V398.84 H759.90 V398.25 H760.80 V397.66 H761.70 V397.07 H762.60 V397.66" fill="none" stroke="#2fdbe6" stroke-width="1.55"/>
</g>
</svg>
<!-- header -->
<div class="abs tek">Tek</div>
<div class="abs hdr yel" style="left:395px;">Scan</div>
<div class="abs hdr wht" style="left:626.5px;">M Pos: 904.0ms</div>

<!-- header icons -->
<svg class="abs" style="left:170px;top:0.6px" width="40" height="19" viewBox="170 0 40 19">
 <path d="M176.6,15.9 l1,-1.4 l1,1.4 l1,-1.4 l1,1.4 l1,-1.4 l1.1,1.4 L183.2,15.6 V5.6 l1.1,1.1 l1.1,-1.3 l1.1,1.3 l1.1,-1.3 l1.1,1.3 L189.8,5.6 V15.6 l1.1,-1.1 l1,1.4 l1,-1.4 l1,1.4 l1,-1.4 l1,1.4 l1,-1.4 l1,1.4" fill="none" stroke="#e4e4f0" stroke-width="1.3" stroke-linejoin="round"/>
</svg>
<svg class="abs" style="left:376px;top:0" width="16" height="16" viewBox="376 0 16 16">
 <rect x="378.6" y="2.7" width="10.4" height="10.4" fill="#343f98" stroke="#e6e03c" stroke-width="1.5"/>
</svg>
<!-- channel markers -->
<svg class="abs" style="left:0;top:248px" width="24" height="36" viewBox="0 0 24 36">
 <defs>
  <linearGradient id="gy" x1="0" y1="0" x2="0" y2="1"><stop offset="0" stop-color="#fff66a"/><stop offset=".5" stop-color="#f2e52a"/><stop offset="1" stop-color="#c9b40e"/></linearGradient>
 </defs>
 <path d="M0,1 H15.5 L22.3,8.3 L15.5,15.6 H0 Z" fill="url(#gy)"/>
 <text x="9.6" y="13.4" font-family="Liberation Sans, sans-serif" font-weight="bold" font-size="14.5" fill="#0a0a0a" text-anchor="middle">1</text>
</svg>
<svg class="abs" style="left:0;top:423.9px" width="24" height="18" viewBox="0 0 24 18">
 <defs>
  <linearGradient id="gc" x1="0" y1="0" x2="0" y2="1"><stop offset="0" stop-color="#e9fcff"/><stop offset=".5" stop-color="#aee8f3"/><stop offset="1" stop-color="#74c5d8"/></linearGradient>
 </defs>
 <path d="M0,1 H15.5 L22.3,8.3 L15.5,15.6 H0 Z" fill="url(#gc)"/>
 <text x="9.6" y="13.4" font-family="Liberation Sans, sans-serif" font-size="15" fill="#0a0a0a" stroke="#0a0a0a" stroke-width="0.35" text-anchor="middle">2</text>
</svg>

<!-- measurement panels -->
<div class="panel" style="left:1px;top:451.6px;width:410.5px;height:49.6px;"></div>
<div class="panel" style="left:414.5px;top:451.6px;width:430px;height:49.6px;"></div>
<div class="badge b1" style="left:10.8px;top:455.4px;">1</div>
<div class="badge b1" style="left:10.8px;top:479.2px;">1</div>
<div class="abs yel" style="left:52.6px;top:454px;">最小値</div>
<div class="abs yel" style="left:52.6px;top:477.5px;">平均値</div>
<div class="abs yel" style="left:253px;top:453px;">?</div>
<div class="abs yel" style="left:253px;top:477px;">?</div>
<div class="badge b1" style="left:424.2px;top:455.4px;">1</div>
<div class="badge b2" style="left:424.2px;top:479.2px;">2</div>
<div class="abs yel" style="left:467px;top:453px;font-size:19px;transform:scaleX(0.945);transform-origin:0 0;">Pk-Pk</div>
<div class="abs cya" style="left:466.6px;top:477.5px;">平均値</div>
<div class="abs yel" style="left:667px;top:453px;">?</div>
<div class="abs cya" style="left:667px;top:477px;">?</div>

<!-- scale row -->
<div class="panel" style="left:1px;top:508px;width:410.5px;height:25.5px;"></div>
<div class="panel" style="left:414.5px;top:508px;width:238.5px;height:25.5px;"></div>
<div class="panel" style="left:657.5px;top:508px;width:285px;height:25.5px;"></div>
<div class="badge b1" style="left:12.6px;top:512px;">1</div>
<div class="abs yel" style="left:60px;top:508.5px;font-size:19px;">2.00V</div>
<div class="badge b2" style="left:202px;top:512px;">2</div>
<div class="abs cya" style="left:250px;top:508.5px;font-size:19px;">1.00V</div>
<div class="abs wht" style="left:426.5px;top:508.5px;">M 2.50s</div>
<div class="abs yel" style="left:670.5px;top:510px;font-size:18.2px;transform:scaleX(0.93);transform-origin:0 0;">CH1</div>
<div class="abs yel" style="left:727.8px;top:510px;font-size:18.2px;">1.68V</div>
<div class="abs yel" style="left:818px;top:510px;font-size:18.2px;letter-spacing:0.3px;">&lt;10Hz</div>

<svg class="abs" style="left:708px;top:510px" width="18" height="20" viewBox="708 510 18 20">
 <path d="M712,524.3 H714.6 L718.8,516.8 H721.4" fill="none" stroke="#e6e03c" stroke-width="1.4"/>
</svg>
<!-- status row -->
<div class="panel" style="left:1px;top:536px;width:941.5px;height:25px;"></div>
<div class="abs wht" style="left:6px;top:536px;">お待ちください...</div>
<div class="abs wht" style="left:767px;top:536.3px;font-size:18px;letter-spacing:0.46px;">Oct 16, 2024, 09:03</div>

<!-- side menu -->
<div id="menu"></div>
<div class="abs mtitle">保存<span style="margin:0 1.5px">/</span>呼出</div>
<div class="btn" style="top:28px;"><div style="top:24px;letter-spacing:0.8px;left:-0.6px">アクション</div><div style="top:47px;">画像保存</div></div>
<div class="btn" style="top:124px;"><div style="top:12px;">ファイル</div><div style="top:36px;letter-spacing:0.3px;">フォーマット</div><div style="top:59px;">Jpg</div></div>
<div class="btn" style="top:219.5px;"><div style="top:23px;">画像保存</div><div style="top:46px;">について</div></div>
<div class="btn" style="top:314.5px;"><div style="top:23px;">フォルダ</div><div style="top:46.3px;">選択</div></div>
<div class="btn" style="top:410px;height:91.6px;border-bottom:none;box-shadow:inset 0.6px 0 0 0 #93c0fc;border-radius:5.5px 5.5px 3px 4px;"><div style="top:25px;">保存</div><div style="top:45.3px;font-size:18.6px;transform:scaleX(0.935);">TEK0005.JPG</div></div>
</body>
</html>
